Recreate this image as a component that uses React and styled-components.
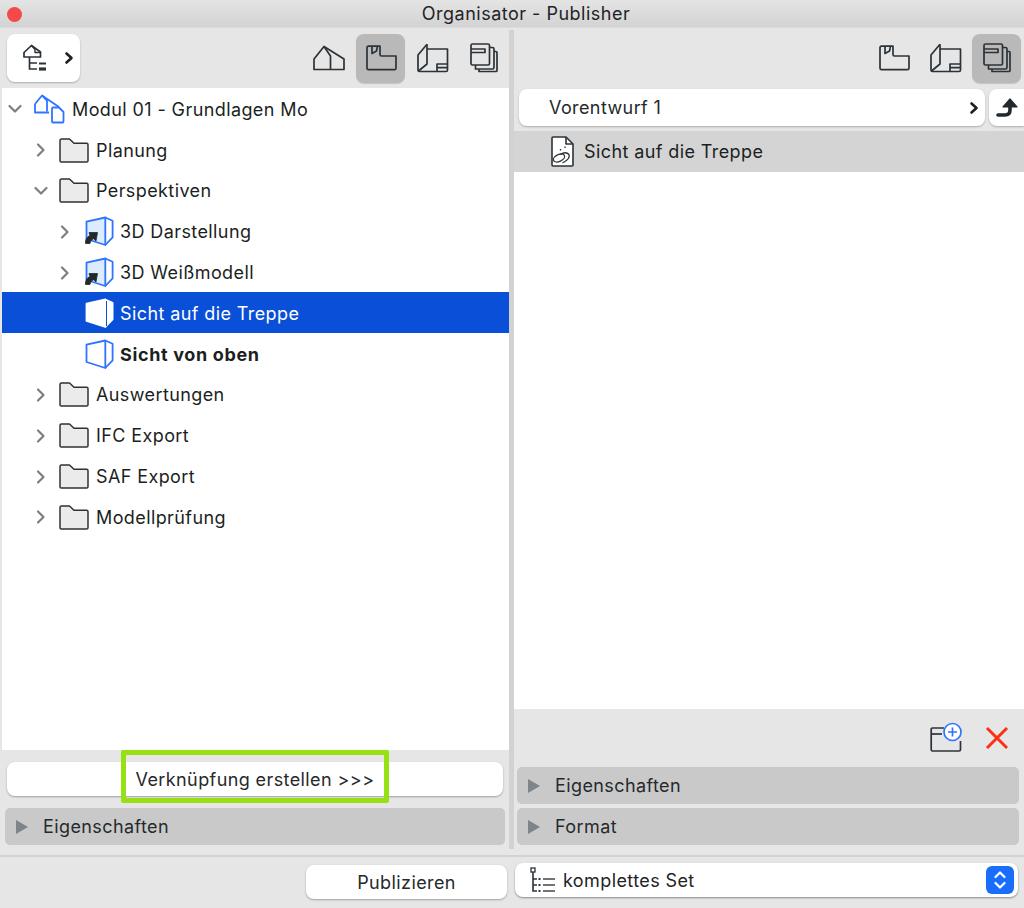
import React from "react";
import styled, { createGlobalStyle } from "styled-components";

const GlobalStyle = createGlobalStyle`
  html, body {
    margin: 0;
    padding: 0;
    background: #e6e6e6;
    font-family: Inter, "Liberation Sans", sans-serif;
    font-size: 18px;
    letter-spacing: 0.4px;
    color: #1f2326;
  }
  * { box-sizing: border-box; }
`;

const INK = "#2b3339";
const BLUE = "#2f74ff";

function HomeIcon() {
  return (
    <svg width="32" height="26" viewBox="0 0 32 26" fill="none" stroke={INK} strokeWidth="1.7" strokeLinejoin="round">
      <path d="M1 14 11 1.5 31 14V24.5H1Z" />
      <path d="M11 1.5 17.5 11V24.5" />
    </svg>
  );
}

function PlanIcon() {
  return (
    <svg width="32" height="26" viewBox="0 0 32 26" fill="none" stroke={INK} strokeWidth="1.7" strokeLinejoin="round">
      <path d="M2 2.5Q2 1.2 3.5 1.2H15V9.5Q15 11 16.5 11H31V23Q31 24.7 29.5 24.7H3.5Q2 24.7 2 23Z" />
      <path d="M7 1.2V8.5L11.5 6L12.5 1.2" />
    </svg>
  );
}

function SheetIcon() {
  return (
    <svg width="33" height="30" viewBox="0 0 33 30" fill="none" stroke={INK} strokeWidth="1.7" strokeLinejoin="round">
      <path d="M11 1.2 2 12V27Q2 28.5 3.5 28.5H30Q31.5 28.5 31.5 27V6H11" />
      <path d="M11 1.2V21L2.5 28M21 28.5V21H31.5M21 24.7H31.5" />
    </svg>
  );
}

function StackIcon() {
  return (
    <svg width="30" height="30" viewBox="0 0 30 30" fill="none" stroke={INK} strokeWidth="1.7" strokeLinejoin="round">
      <path d="M2 2.5Q2 1 3.5 1H19Q20.5 1 20.5 2.5V20.5Q20.5 22 19 22H3.5Q2 22 2 20.5Z" />
      <path d="M2 6H16V9.5H2" />
      <path d="M20.5 4.5H23.5Q25 4.5 25 6V24.5Q25 26 23.5 26H6.5V22" />
      <path d="M25 8.5H27Q28 8.5 28 9.5V27.5Q28 28.5 27 28.5H10V26" />
    </svg>
  );
}

function NavigatorIcon() {
  return (
    <svg width="24" height="28" viewBox="0 0 24 28" fill="none" stroke={INK} strokeWidth="1.7" strokeLinejoin="round">
      <path d="M1 8.5 8.5 1.5 17.5 8V13H1Z" />
      <path d="M8.5 1.5 12 5.5 12 8.5H17.5" strokeWidth="1.4" />
      <path d="M6.5 13V25H14M6.5 19H14" />
      <path d="M16 19.5H23" strokeWidth="2" />
      <path d="M16 25H23" strokeWidth="3.2" />
    </svg>
  );
}

function ModuleIcon() {
  return (
    <svg width="31" height="30" viewBox="0 0 31 30" fill="none" stroke={BLUE} strokeWidth="1.8" strokeLinejoin="round">
      <path d="M1 10 8 1.5 25 13" />
      <path d="M1 10V18.5H15" />
      <path d="M8 1.5 13 6.5V17.5" />
      <path d="M18 14.5Q18 13.5 19 13.5H25L29.5 18V27.5Q29.5 28.5 28.5 28.5H19Q18 28.5 18 27.5Z" />
    </svg>
  );
}

function FolderIcon() {
  return (
    <svg width="31" height="25" viewBox="-1 0 31 25" fill="#ebebeb" stroke={INK} strokeWidth="1.5" strokeLinejoin="round">
      <path d="M1 2.5Q1 1 2.5 1H10.5L15 5.2H27.7Q29 5.2 29 6.7V22.7Q29 24 27.7 24H2.3Q1 24 1 22.7Z" />
    </svg>
  );
}

function ViewIcon({ solid, tinted, shortcut }) {
  const line = solid ? "#ffffff" : BLUE;
  const fill = solid ? "#ffffff" : tinted ? "#ddecfd" : "#ffffff";
  return (
    <svg width="32" height="31" viewBox="-3 0 32 31" strokeLinejoin="round">
      <path d="M1.5 5.7 20.3 1.5V29L1.5 23Z" fill={fill} stroke={line} strokeWidth="1.8" />
      <path d="M20.3 1.5 27.6 4.7V21.3L20.3 29" fill={solid ? "#ffffff" : "none"} stroke={line} strokeWidth="1.8" />
      {solid && <path d="M21.5 3V28" stroke="#0a4fd8" strokeWidth="1" />}
      {shortcut && (
        <path
          d="M0.5 27.5Q0 21.5 5 19.5L4 16.5 12.5 16.5 11 25 8.5 22.7Q5.2 24 5 27.5Z"
          fill="#22282c"
          stroke="#22282c"
          strokeWidth="0.8"
        />
      )}
    </svg>
  );
}

function DocIcon() {
  return (
    <svg width="23" height="31" viewBox="0 0 23 31" fill="none" stroke={INK} strokeWidth="1.6" strokeLinejoin="round">
      <path fill="#fff" d="M1 2Q1 1 2 1H15L22 8V29Q22 30 21 30H2Q1 30 1 29Z" />
      <path d="M15 1V8H22" />
      <ellipse cx="8" cy="22" rx="6" ry="3.4" transform="rotate(-25 8 22)" strokeWidth="1.3" />
      <path d="M9 18.5Q15 15 18 18.5Q19.5 23 11.5 27" strokeWidth="1.3" />
      <path d="M14 10.5V12M9.5 13V14.5" strokeWidth="1.3" />
    </svg>
  );
}

const Chevron = ({ open }) => (
  <svg width="16" height="16" viewBox="0 0 16 16" fill="none" stroke="#7b7f82" strokeWidth="2.2" strokeLinecap="round" strokeLinejoin="round">
    <path d={open ? "M2.5 5 8 10.5 13.5 5" : "M5 2.5 10.5 8 5 13.5"} />
  </svg>
);

const SmallChevron = () => (
  <svg width="10" height="14" viewBox="0 0 10 14" fill="none" stroke="#1b1f22" strokeWidth="2.6" strokeLinecap="round" strokeLinejoin="round">
    <path d="M2.5 2.5 7.5 7 2.5 11.5" />
  </svg>
);

const Window = styled.div`
  width: 1024px;
  height: 908px;
  display: flex;
  flex-direction: column;
  overflow: hidden;
  background: #e6e6e6;
`;

const TitleBar = styled.header`
  position: relative;
  flex: 0 0 28px;
  display: flex;
  align-items: center;
  justify-content: center;
  padding-left: 28px;
  background: linear-gradient(#e4e4e4, #d3d3d3);
  border-bottom: 1px solid #dcdcdc;
  letter-spacing: 0.5px;
`;

const CloseDot = styled.span`
  position: absolute;
  left: 7px;
  top: 7px;
  width: 15px;
  height: 15px;
  border-radius: 50%;
  background: #f5484a;
`;

const Main = styled.div`
  flex: 1;
  display: flex;
  min-height: 0;
  padding-left: 2px;
`;

const Pane = styled.section`
  display: flex;
  flex-direction: column;
  width: ${(p) => p.$width}px;
  flex: none;
`;

const Splitter = styled.div`
  flex: 0 0 5px;
  margin: 2px 0 6px;
  background: #d2d2d2;
`;

const Toolbar = styled.div`
  flex: 0 0 60px;
  display: flex;
  align-items: center;
  justify-content: ${(p) => (p.$split ? "space-between" : "flex-end")};
  gap: 2.4px;
  padding: 0 ${(p) => p.$right}px 0 5px;
`;

const ToolGroup = styled.div`
  display: flex;
  gap: 2.4px;
`;

const ToolButton = styled.div`
  width: 49px;
  height: 49px;
  display: flex;
  align-items: center;
  justify-content: center;
  border-radius: 8px;
  background: ${(p) => (p.$active ? "#b9b9b9" : "transparent")};
  box-shadow: ${(p) => (p.$active ? "0 1px 1px rgba(0,0,0,.15)" : "none")};
`;

const NavigatorMenu = styled.div`
  width: 73px;
  height: 48px;
  display: flex;
  align-items: center;
  justify-content: space-between;
  padding: 0 6px 0 16px;
  background: #fff;
  border-radius: 8px;
  box-shadow: 0 1px 2px rgba(0, 0, 0, 0.25);
`;

const Tree = styled.div`
  flex: 1;
  background: #fff;
  padding-top: 0.5px;
`;

const Row = styled.div`
  height: 40.8px;
  display: flex;
  align-items: center;
  padding: 1px 0 0 ${(p) => 5 + p.$level * 24}px;
  font-weight: ${(p) => (p.$bold ? 700 : 400)};
  letter-spacing: ${(p) => (p.$bold ? "0.65px" : "0.4px")};
  background: ${(p) => (p.$selected ? "#0a4fd8" : "transparent")};
  color: ${(p) => (p.$selected ? "#fff" : "#1b1f22")};
`;

const ChevronCell = styled.span`
  flex: 0 0 27px;
  display: flex;
  align-items: center;
  padding-left: ${(p) => (p.$nested ? 2 : 0)}px;
`;

const IconCell = styled.span`
  flex: 0 0 38px;
  display: flex;
  align-items: center;
`;

const LeftFooter = styled.div`
  flex: 0 0 105px;
  position: relative;
  display: flex;
  flex-direction: column;
  padding: 12px 4px 0 3px;
`;

const WideButton = styled.div`
  height: 34px;
  display: flex;
  align-items: center;
  justify-content: center;
  background: #fff;
  border-radius: 8px;
  color: #26292c;
  box-shadow: 0 1px 2px rgba(0, 0, 0, 0.3);
`;

const LinkButton = styled(WideButton)`
  margin: 0 2px;
`;

const Callout = styled.div`
  position: absolute;
  left: 119px;
  top: 0;
  width: 268px;
  height: 53px;
  border: 5.5px solid #97e014;
  border-radius: 2px;
`;

const Disclosure = styled.div`
  height: 37px;
  display: flex;
  align-items: center;
  gap: 15px;
  padding-left: 11px;
  background: #c9c9c9;
  border-radius: 5px;
  color: #26292c;
  margin-top: ${(p) => p.$top}px;
`;

const Triangle = styled.span`
  width: 0;
  height: 0;
  border-left: 12px solid #7f8488;
  border-top: 7px solid transparent;
  border-bottom: 7px solid transparent;
`;

const PathRow = styled.div`
  flex: 0 0 43px;
  display: flex;
  gap: 4px;
  padding: 1px 0 5px 5px;
`;

const PathField = styled.div`
  flex: 1;
  display: flex;
  align-items: center;
  justify-content: space-between;
  padding: 0 6px 0 30px;
  background: #fff;
  border-radius: 8px;
  color: #26292c;
  box-shadow: 0 1px 2px rgba(0, 0, 0, 0.25);
`;

const UpButton = styled.div`
  width: 35px;
  display: flex;
  align-items: center;
  justify-content: center;
  background: #fff;
  border-radius: 8px 0 0 8px;
  box-shadow: 0 1px 2px rgba(0, 0, 0, 0.25);
`;

const FileList = styled.div`
  flex: 1;
  background: #fff;
`;

const FileRow = styled.div`
  height: 41px;
  display: flex;
  align-items: center;
  gap: 10px;
  padding-left: 37px;
  background: #d4d4d4;
  color: #1b1f22;
`;

const ActionBar = styled.div`
  flex: 0 0 58px;
  display: flex;
  align-items: center;
  justify-content: flex-end;
  gap: 23px;
  padding: 0 15px 0 0;
`;

const RightFooter = styled.div`
  flex: 0 0 88px;
  padding: 0 5px 0 3px;
  display: flex;
  flex-direction: column;
`;

const BottomBar = styled.footer`
  flex: 0 0 53px;
  display: flex;
  align-items: flex-start;
  border-top: 2px solid #d2d2d2;
`;

const PublishCell = styled.div`
  flex: 0 0 515px;
  display: flex;
  justify-content: flex-end;
  padding: 8px 8px 0 0;
`;

const PublishButton = styled(WideButton)`
  width: 201px;
`;

const SetSelect = styled.div`
  margin-top: 6px;
  width: 503px;
  height: 34px;
  display: flex;
  align-items: center;
  gap: 8px;
  padding: 0 4px 0 15px;
  background: #fff;
  border-radius: 8px;
  color: #1f2326;
  box-shadow: 0 1px 2px rgba(0, 0, 0, 0.4);
`;

const SelectArrows = styled.span`
  margin-left: auto;
  width: 28px;
  height: 28px;
  display: flex;
  align-items: center;
  justify-content: center;
  border-radius: 6px;
  background: #1a6dfb;
`;

const treeRows = [
  { level: 0, open: true, icon: <ModuleIcon />, label: "Modul 01 - Grundlagen Mo" },
  { level: 1, open: false, icon: <FolderIcon />, label: "Planung" },
  { level: 1, open: true, icon: <FolderIcon />, label: "Perspektiven" },
  { level: 2, open: false, icon: <ViewIcon tinted shortcut />, label: "3D Darstellung" },
  { level: 2, open: false, icon: <ViewIcon tinted shortcut />, label: "3D Weißmodell" },
  { level: 2, icon: <ViewIcon solid />, label: "Sicht auf die Treppe", selected: true },
  { level: 2, icon: <ViewIcon />, label: "Sicht von oben", bold: true },
  { level: 1, open: false, icon: <FolderIcon />, label: "Auswertungen" },
  { level: 1, open: false, icon: <FolderIcon />, label: "IFC Export" },
  { level: 1, open: false, icon: <FolderIcon />, label: "SAF Export" },
  { level: 1, open: false, icon: <FolderIcon />, label: "Modellprüfung" },
];

export default function App() {
  return (
    <Window>
      <GlobalStyle />
      <TitleBar>
        <CloseDot />
        Organisator - Publisher
      </TitleBar>
      <Main>
        <Pane $width={507}>
          <Toolbar $split $right={1}>
            <NavigatorMenu>
              <NavigatorIcon />
              <SmallChevron />
            </NavigatorMenu>
            <ToolGroup>
              <ToolButton><HomeIcon /></ToolButton>
              <ToolButton $active><PlanIcon /></ToolButton>
              <ToolButton><SheetIcon /></ToolButton>
              <ToolButton><StackIcon /></ToolButton>
            </ToolGroup>
          </Toolbar>
          <Tree>
            {treeRows.map((row) => (
              <Row key={row.label} $level={row.level} $selected={row.selected} $bold={row.bold}>
                <ChevronCell $nested={row.level > 0}>
                  {row.open !== undefined && <Chevron open={row.open} />}
                </ChevronCell>
                <IconCell>{row.icon}</IconCell>
                {row.label}
              </Row>
            ))}
          </Tree>
          <LeftFooter>
            <LinkButton>Verknüpfung erstellen &gt;&gt;&gt;</LinkButton>
            <Callout />
            <Disclosure $top={12}>
              <Triangle />
              Eigenschaften
            </Disclosure>
          </LeftFooter>
        </Pane>
        <Splitter />
        <Pane $width={510}>
          <Toolbar $right={3}>
            <ToolButton><PlanIcon /></ToolButton>
            <ToolButton><SheetIcon /></ToolButton>
            <ToolButton $active><StackIcon /></ToolButton>
          </Toolbar>
          <PathRow>
            <PathField>
              Vorentwurf 1
              <SmallChevron />
            </PathField>
            <UpButton>
              <svg width="24" height="22" viewBox="0 0 24 22" fill="none" stroke="#22292e">
                <path d="M3 18H10Q15 18 15 13V8" strokeWidth="3.6" strokeLinecap="round" />
                <path d="M15 2 8 10H22Z" fill="#22292e" strokeWidth="1.2" strokeLinejoin="round" />
              </svg>
            </UpButton>
          </PathRow>
          <FileList>
            <FileRow>
              <DocIcon />
              Sicht auf die Treppe
            </FileRow>
          </FileList>
          <ActionBar>
            <svg width="32" height="32" viewBox="0 0 32 32" fill="none" strokeLinejoin="round">
              <path d="M14 6H2.5Q1.2 6 1.2 7.5V27.5Q1.2 29 2.5 29H29Q30.5 29 30.5 27.5V19" stroke={INK} strokeWidth="1.7" />
              <path d="M1.2 12H12" stroke={INK} strokeWidth="1.7" />
              <circle cx="22.5" cy="10" r="8.5" fill="#fff" stroke={BLUE} strokeWidth="1.7" />
              <path d="M22.5 5.5V14.5M18 10H27" stroke={BLUE} strokeWidth="1.7" />
            </svg>
            <svg width="24" height="24" viewBox="0 0 24 24" fill="none" stroke="#fb3015" strokeWidth="3">
              <path d="M2 2 22 22M22 2 2 22" />
            </svg>
          </ActionBar>
          <RightFooter>
            <Disclosure $top={0}>
              <Triangle />
              Eigenschaften
            </Disclosure>
            <Disclosure $top={4}>
              <Triangle />
              Format
            </Disclosure>
          </RightFooter>
        </Pane>
      </Main>
      <BottomBar>
        <PublishCell>
          <PublishButton>Publizieren</PublishButton>
        </PublishCell>
        <SetSelect>
          <svg width="25" height="26" viewBox="0 0 25 26" fill="none" stroke={INK} strokeWidth="1.6">
            <rect x="1" y="1" width="4" height="4" strokeWidth="1.3" />
            <path d="M3 5V24H7M3 12H7M3 18H7" />
            <path d="M8.5 12H10.5M8.5 18H10.5M8.5 24H10.5" strokeWidth="2.2" />
            <path d="M13 12H25M13 18H25M13 24H25" stroke="#6e7478" strokeWidth="2" />
          </svg>
          komplettes Set
          <SelectArrows>
            <svg width="14" height="20" viewBox="0 0 14 20" fill="none" stroke="#fff" strokeWidth="2.2" strokeLinecap="round" strokeLinejoin="round">
              <path d="M2.5 7 7 2.5 11.5 7M2.5 13 7 17.5 11.5 13" />
            </svg>
          </SelectArrows>
        </SetSelect>
      </BottomBar>
    </Window>
  );
}
